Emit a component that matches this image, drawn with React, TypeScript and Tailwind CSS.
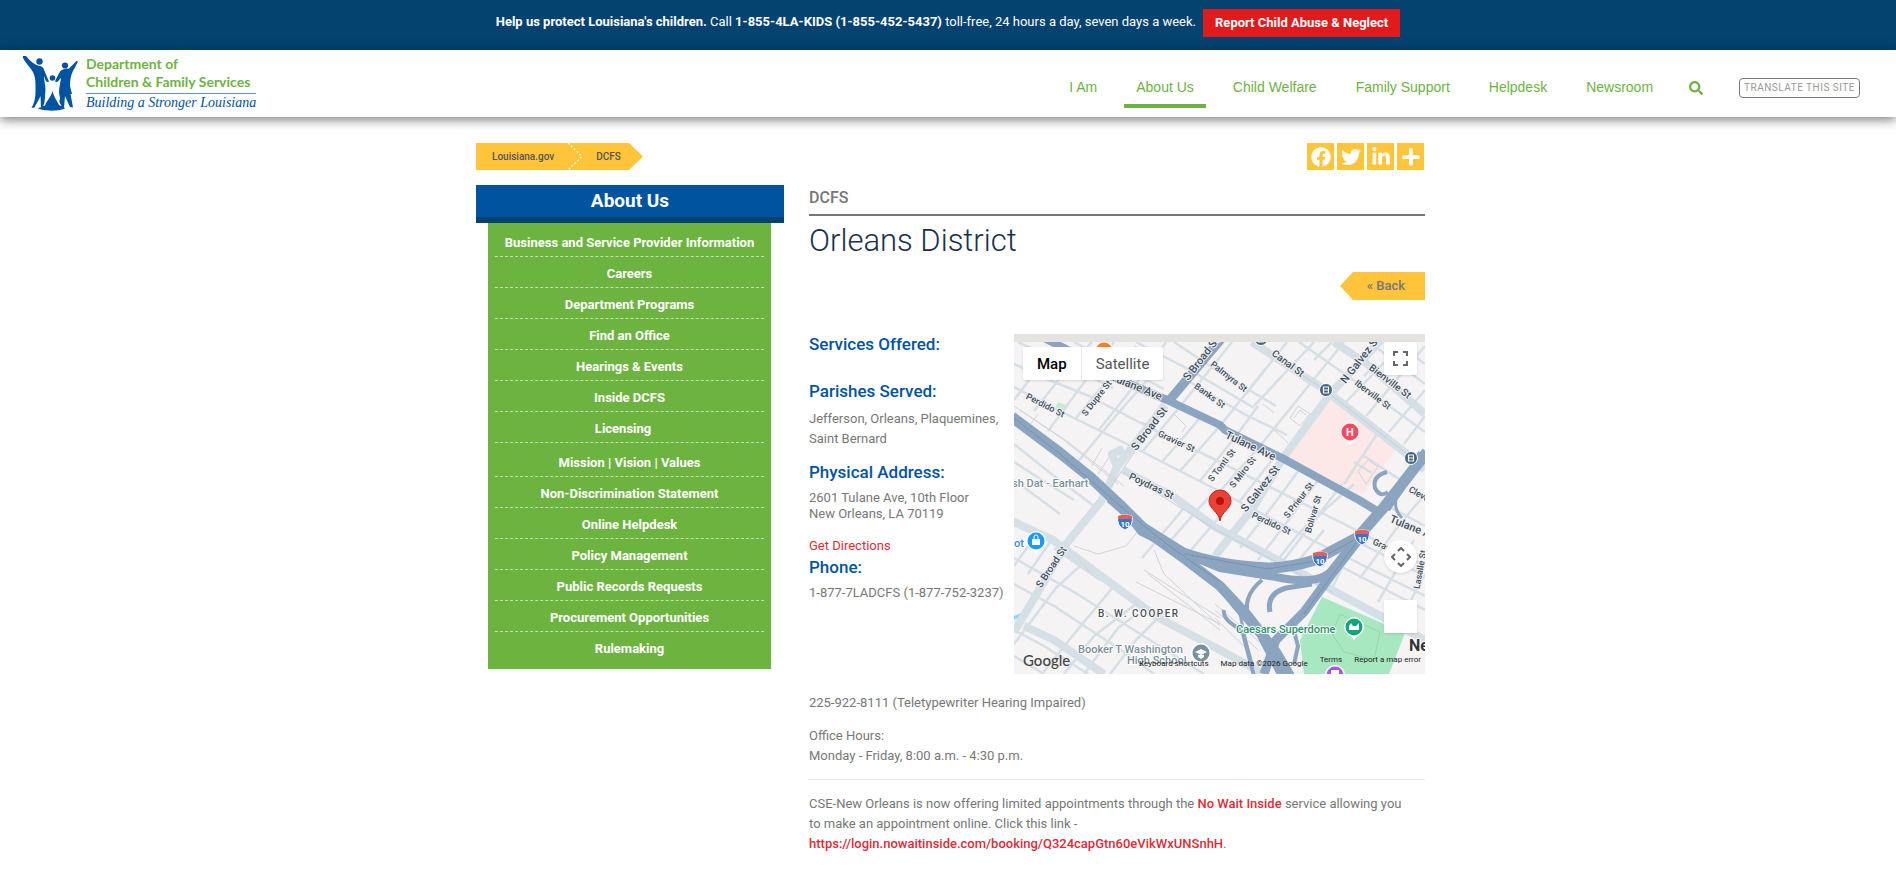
import { FaFacebook, FaLinkedinIn, FaPlus, FaSearch, FaTwitter } from "react-icons/fa";

const NAV = ["I Am", "About Us", "Child Welfare", "Family Support", "Helpdesk", "Newsroom"];

const SIDE_LINKS = [
  "Business and Service Provider Information",
  "Careers",
  "Department Programs",
  "Find an Office",
  "Hearings & Events",
  "Inside DCFS",
  "Licensing\u00a0\u00a0\u00a0\u00a0",
];

const SIDE_LINKS_MORE = [
  "Mission | Vision | Values",
  "Non-Discrimination Statement",
  "Online Helpdesk",
  "Policy Management",
  "Public Records Requests",
  "Procurement Opportunities",
  "Rulemaking",
];

const SHARE = [
  { label: "Facebook", Icon: FaFacebook },
  { label: "Twitter", Icon: FaTwitter },
  { label: "LinkedIn", Icon: FaLinkedinIn },
  { label: "Share", Icon: FaPlus },
];

// Side streets, drawn thin
const STREETS = [
  "M0 53 60 84 119 113 205 157 300 207 411 262",
  "M0 30 30 44 75 62 144 98 206 128 330 190 411 232",
  "M4 8 50 30 99 54",
  "M60 8 150 55",
  "M122 8 176 36 240 74",
  "M160 8 205 38 262 72",
  "M176 48 230 80 273 101",
  "M240 8 262 26",
  "M285 8 345 50 411 98",
  "M355 8 411 50",
  "M382 8 411 30",
  "M20 77 54 34 78 8",
  "M0 66 44 8",
  "M34 97 100 8",
  "M62 84 122 12",
  "M84 97 128 42 152 8",
  "M62 130 100 84 134 45",
  "M128 118 164 75 210 18 218 8",
  "M148 128 186 84",
  "M166 137 206 92 252 34",
  "M186 147 222 102 244 72",
  "M206 157 246 112 300 45 330 8",
  "M226 167 258 126",
  "M288 132 260 170 226 214",
  "M308 141 270 192 244 226",
  "M328 150 300 187 262 236",
  "M300 26 318 8",
  "M352 82 411 12",
  "M330 70 390 8",
  "M375 98 411 56",
  "M390 110 411 82",
  "M363 100 330 150",
  "M240 72 300 8",
  "M232 60 273 8",
  "M350 42 362 30",
  "M0 224 60 258 120 296 190 340",
  "M0 250 40 272 110 318 140 340",
  "M0 296 30 312 74 340",
  "M0 322 30 340",
  "M40 214 86 246",
  "M28 340 60 300 100 252",
  "M50 340 80 302 122 270",
  "M0 310 42 254 66 232",
  "M70 340 104 294 128 276",
  "M96 340 122 306 142 286",
  "M14 240 36 208",
  "M0 232 20 204",
  "M0 110 40 142 80 172",
  "M0 128 28 146 60 166",
  "M0 146 46 180",
  "M128 224 170 174",
  "M150 214 194 164",
  "M172 222 206 182",
  "M196 228 224 194",
  "M262 228 286 198 340 150",
  "M280 232 310 196",
  "M330 230 354 196",
  "M346 244 386 190 411 160",
  "M364 268 400 206",
  "M384 290 411 240",
  "M340 206 411 242",
  "M326 232 411 276",
  "M316 258 330 230",
  "M350 122 385 145",
  "M340 128 358 139",
  "M366 168 400 186 411 192",
];

// Wider collectors
const AVENUES = [
  "M238 8 311 56 398 124 411 136",
  "M320 8 353 30 411 80",
  "M368 5 316 60 269 124 241 171 201 222",
  "M151 71 103 133 88 166 53 209 9 283 0 298",
  "M109 136 160 163 201 193 260 224 318 256 411 306",
  "M-4 186 39 206 79 236 143 283 206 316 250 340",
  "M10 292 40 306 90 340",
  "M103 133 98 120 106 116 112 126",
];

const FINE_LINES = [
  "M0 72 50 106 104 150",
  "M6 76 54 108 110 152",
  "M60 212 84 220 112 212 126 194",
  "M140 216 150 240 206 292",
  "M130 236 206 284",
  "M134 240 206 296",
  "M122 248 206 290",
  "M76 238 60 220",
  "M201 270 250 312",
  "M201 276 244 316",
  "M201 284 236 318",
  "M24 80 12 96",
  "M78 132 88 114",
  "M84 140 96 122",
  "M160 80 172 92 168 98",
  "M128 88 142 96",
];

const FREEWAYS = [
  { d: "M-2 83 46 119 76 143 106 171 129 194 169 219Q206 232 254 234 275 234 301 226L344 203 371 172 413 118", w: 11 },
  { d: "M96 164 140 203 172 226 206 252 234 282 262 318 276 342", w: 10 },
  { d: "M170 219 206 234 262 243Q306 252 318 236L344 203", w: 8 },
  { d: "M346 204 318 240 290 278 262 306 250 340", w: 9 },
  { d: "M206 252 222 272 246 300 268 342", w: 8 },
  { d: "M210 276Q208 286 228 296L240 342", w: 4 },
  { d: "M248 246Q226 264 236 286L250 306", w: 4 },
  { d: "M298 250 272 254Q252 260 256 278", w: 5 },
  { d: "M226 280 232 308 238 330", w: 3 },
  { d: "M278 290 284 312 280 330", w: 4 },
  { d: "M373 138Q358 142 361 154 366 164 374 158", w: 4 },
  { d: "M406 118 388 156 374 176", w: 4 },
  { d: "M112 182 126 200 150 212", w: 3 },
  { d: "M382 166 Q380 176 388 184", w: 3 },
];

const STREET_LABELS = [
  { t: "Perdido St", x: 30, y: 74, r: 27, s: 9 },
  { t: "S Dupre St", x: 85, y: 66, r: -52, s: 9 },
  { t: "Tulane Ave", x: 121, y: 56, r: 22, s: 11 },
  { t: "S Broad St", x: 190, y: 27, r: -52, s: 11 },
  { t: "S Broad St", x: 138, y: 97, r: -52, s: 11 },
  { t: "Gravier St", x: 161, y: 110, r: 25, s: 9 },
  { t: "Banks St", x: 194, y: 64, r: 36, s: 9 },
  { t: "Palmyra St", x: 213, y: 45, r: 38, s: 9 },
  { t: "Canal St", x: 272, y: 32, r: 37, s: 10 },
  { t: "N Galvez St", x: 349, y: 28, r: -52, s: 11 },
  { t: "Bienville St", x: 374, y: 50, r: 37, s: 10 },
  { t: "Iberville St", x: 357, y: 63, r: 37, s: 9 },
  { t: "Tulane Ave", x: 235, y: 115, r: 25, s: 11 },
  { t: "S Tonti St", x: 210, y: 133, r: -52, s: 9 },
  { t: "S Miro St", x: 231, y: 140, r: -52, s: 9 },
  { t: "S Galvez St", x: 249, y: 157, r: -52, s: 11 },
  { t: "Poydras St", x: 136, y: 155, r: 25, s: 10 },
  { t: "Perdido St", x: 256, y: 192, r: 25, s: 9 },
  { t: "S Prieur St", x: 287, y: 168, r: -52, s: 9 },
  { t: "Bolivar St", x: 302, y: 181, r: -74, s: 9 },
  { t: "S Broad St", x: 40, y: 235, r: -56, s: 10 },
  { t: "Tulane Ave", x: 400, y: 198, r: 22, s: 11 },
  { t: "Gravier St", x: 376, y: 218, r: 24, s: 9 },
  { t: "Lasalle St", x: 409, y: 236, r: -80, s: 9 },
  { t: "Cleveland", x: 411, y: 167, r: 30, s: 9 },
];

function Logo() {
  return (
    <a href="#home" className="flex items-center gap-2" aria-label="Department of Children & Family Services">
      <svg viewBox="0 0 55 55" className="h-[55px] w-[55px] shrink-0" fill="#00549f">
        <circle cx="16.5" cy="5.5" r="3.2" />
        <circle cx="42" cy="9.5" r="3.1" />
        <path d="M0 0 3 0C7 5 11 8.500 16 10c3 0 5 2 5.500 5l4 9.500c1 1.500-1 3-2.200 1.500L21 20c0 5 1.500 9 1.500 14L21 53h-3l-.500-13C16 44 13 48 11.500 51.500L8.500 52C12 46 12.500 40 12.500 35 12.500 25 13 20 8 13 5 9 2 6 0 2Z" />
        <path d="M55 5.500 53.500 5 46 12.500c-4 .500-7 .500-9 3L32.500 24c-1 2 1 3 2.500 1.500l3-4c-.500 5-2 10-2 15L37 42l-1 5 1 5h4l1-12 5 11 3 .500L47.500 38h1.500L47 30c0-7 1-11 3-15Z" />
        <path d="M22 24.500c2 1.500 4 2.500 7.500 2.500s5-1 7-2.500L33.500 31c-.500 4 .500 8 2 13l3 6-7.500-2-1.500-9-2 9-7.500 2 4-8c1.500-4 2.500-7 1.500-11Z" fill="#fff" />
        <circle cx="29.5" cy="22" r="2.8" />
        <path d="M29.500 35c-1 5-5 9-7 13 0 2-3 3.500-8 4C19 55.500 38 55.500 42.500 52c-4-.500-6-2-7-4-2-4-5-8-6-13Z" />
      </svg>
      <span className="block">
        <span className="block font-['Lato',sans-serif] text-sm leading-[18px] font-bold text-[#6db33f]">
          Department of
          <br />
          Children &amp; Family Services
        </span>
        <span className="mt-[2px] block border-t border-[#5f93c4] font-['Liberation_Serif',serif] text-sm leading-[18px] text-[#00549f] italic">
          Building a Stronger Louisiana
        </span>
      </span>
    </a>
  );
}

function Shield({ x, y }: { x: number; y: number }) {
  return (
    <g transform={`translate(${x} ${y})`}>
      <path d="M-7-6Q0-9 7-6 9 4 0 8-9 4-7-6Z" fill="#3d74c6" stroke="#fff" strokeWidth="1" />
      <path d="M-7-6Q0-9 7-6L7-3H-7Z" fill="#e0605c" />
      <text y="5" fontSize="8" fontWeight="700" fill="#fff" textAnchor="middle">
        10
      </text>
    </g>
  );
}

function Pin({ x, y, color }: { x: number; y: number; color: string }) {
  return (
    <g transform={`translate(${x} ${y})`}>
      <path d="M-10 0a10 10 0 1 1 20 0c0 6-6 8-10 13-4-5-10-7-10-13Z" fill="#fff" />
      <circle r="8.500" fill={color} />
    </g>
  );
}

function MapDrawing() {
  return (
    <svg
      viewBox="0 0 411 340"
      preserveAspectRatio="xMidYMid slice"
      className="h-full w-full font-['Roboto',sans-serif]"
      role="img"
      aria-label="Map of 2601 Tulane Ave"
    >
      <rect width="411" height="340" fill="#f5f3f4" />
      <path d="M318 64 383 114 348 161 273 124Z" fill="#fce8e6" />
      <path d="M44 68 54 72 50 79 41 74Z" fill="#c3ecd0" />
      <path d="M0 282 14 276 10 281 0 286Z" fill="#8adcf0" />
      <path d="M308 263 391 299 375 340H290L286 306Z" fill="#a8e8c0" />
      <path d="M326 280 366 298 360 326 330 318 318 300Z" fill="none" stroke="#95d6af" />
      <g fill="none" stroke="#d5dfe6" strokeLinejoin="round">
        <g strokeWidth="2.500">
          {STREETS.map((d) => (
            <path key={d} d={d} />
          ))}
        </g>
        <g strokeWidth="8">
          {AVENUES.map((d) => (
            <path key={d} d={d} />
          ))}
        </g>
        <g strokeWidth="1" stroke="#d0d4d8">
          {FINE_LINES.map((d) => (
            <path key={d} d={d} />
          ))}
          <path d="M276 84 284 72 296 80 286 92ZM280 84 286 76 292 81M249 70 260 79M260 96 274 109M344 137 354 126 364 133 352 150Z" />
        </g>
      </g>
      <g fill="none" stroke="#c3d0da">
        <path d="M262 24 311 56 398 124M151 73 92 160M109 138 201 195 318 258" />
      </g>
      <g fill="none" stroke="#8ba5c1" strokeLinejoin="round">
        <path d="M30 4 50 14 99 43 153 66 206 91 211 96 268 124 345 166 368 180" strokeWidth="8" />
        <path d="M208 4 154 68" strokeWidth="9" />
        {FREEWAYS.map((f) => (
          <path key={f.d} d={f.d} strokeWidth={f.w} />
        ))}
      </g>
      <g fill="none" stroke="#7793b3" strokeWidth="1">
        <path d="M0 84 46 120 106 172 150 208 206 248M170 220 254 235 301 227 344 204M344 206 290 280" />
      </g>

      {/* street names */}
      <g fill="#3c4f60" stroke="#f5f3f4" strokeWidth="2" strokeLinejoin="round" paintOrder="stroke" textAnchor="middle" fontWeight="500">
        {STREET_LABELS.map((l) => (
          <text key={`${l.t}${l.x}`} transform={`translate(${l.x} ${l.y}) rotate(${l.r})`} fontSize={l.s}>
            {l.t}
          </text>
        ))}
      </g>
      <g stroke="#fff" strokeWidth="2" strokeLinejoin="round" paintOrder="stroke" fontWeight="500" fontSize="11">
        <text x="-2" y="153" fill="#78909c">sh Dat - Earhart</text>
        <text x="0" y="213" fill="#3c8ce7">ot</text>
        <text x="84" y="283" fontSize="10" letterSpacing="1.500" fill="#4a4f55">B. W. COOPER</text>
        <text x="64" y="319" fill="#78909c">Booker T Washington</text>
        <text x="113" y="330" fill="#78909c">High School</text>
        <text x="222" y="299" fill="#26906a">Caesars Superdome</text>
        <text x="395" y="317" fontSize="16" fontWeight="700" fill="#333">New Orleans</text>
      </g>

      <Shield x={111} y={188} />
      <Shield x={306} y={225} />
      <Shield x={348} y={203} />

      <Pin x={336} y={98} color="#f8485e" />
      <text x="336" y="102" fontSize="11" fontWeight="700" fill="#fff" textAnchor="middle">H</text>
      <Pin x={22} y={207} color="#1a9bfc" />
      <path d="M18 205h8v6h-8Z" fill="#fff" />
      <path d="M20 205v-2a2 2 0 0 1 4 0v2" fill="none" stroke="#fff" />
      <Pin x={340} y={293} color="#12a57b" />
      <path d="M335 296v-4l2-3 2 3h3l3-3v7Z" fill="#fff" />
      <Pin x={187} y={319} color="#78909c" />
      <path d="M181 318 187 315 193 318 187 321ZM184 321v2l3 2 3-2v-2" fill="#fff" />
      <Pin x={321} y={341} color="#a855f7" />
      <path d="M317 336h8v4h-8Z" fill="#fff" />
      <Pin x={90} y={17} color="#ff7f27" />

      {/* streetcar stops */}
      {[
        [312, 56],
        [397, 124],
        [247, 5],
      ].map(([x, y]) => (
        <g key={x} transform={`translate(${x} ${y})`}>
          <circle r="6.500" fill="#46637d" stroke="#fff" />
          <path d="M-2.500-3h5v6h-5ZM-2.500 0h5" fill="none" stroke="#fff" strokeWidth="1.200" />
        </g>
      ))}

      <path d="M206 187c-1-9-11-12-11-20a11 11 0 1 1 22 0c0 8-10 11-11 20Z" fill="#ea4335" stroke="#c5221f" strokeWidth="1" />
      <circle cx="206" cy="167" r="4" fill="#b31412" />
      <rect width="411" height="8" fill="#e5e3df" />
    </svg>
  );
}

function OfficeMap() {
  return (
    <div className="relative h-[340px] min-w-0 flex-1 overflow-hidden">
      <MapDrawing />
      <div className="absolute top-[13px] left-[9px] flex h-[33px] rounded-xs bg-white text-[15px] shadow">
        <button className="border-r border-gray-200 px-[14px] font-medium text-black">Map</button>
        <button className="px-[14px] text-[#565656]">Satellite</button>
      </div>
      <button className="absolute top-2 right-2 grid size-[33px] place-items-center rounded-xs bg-white shadow" aria-label="Fullscreen">
        <svg viewBox="0 0 15 15" className="size-[15px]" fill="none" stroke="#666" strokeWidth="2">
          <path d="M1 5V1h4M10 1h4v4M14 10v4h-4M5 14H1v-4" />
        </svg>
      </button>
      <button className="absolute right-2 bottom-[101px] grid size-[33px] place-items-center rounded-full bg-white shadow" aria-label="Map camera controls">
        <svg viewBox="0 0 20 20" className="size-5" fill="none" stroke="#666" strokeWidth="2">
          <path d="M7 4 10 1 13 4M7 16 10 19 13 16M4 7 1 10 4 13M16 7 19 10 16 13" />
        </svg>
      </button>
      <div className="absolute right-2 bottom-[41px] size-[33px] bg-white shadow" />
      <span className="absolute bottom-1 left-[9px] font-['Lato',sans-serif] text-[15px] leading-5 font-medium text-[#444]">Google</span>
      <div className="absolute right-1 bottom-1 flex items-end gap-3 text-[8px] leading-3 text-[#222]">
        <button>Keyboard shortcuts</button>
        <span>Map data ©2026 Google</span>
        <a href="#terms" className="mb-1">Terms</a>
        <a href="#report-map" className="mb-1">Report a map error</a>
      </div>
    </div>
  );
}

function SideItem({ label }: { label: string }) {
  return (
    <li className="h-[31px] border-b border-dashed border-white/60 leading-[34px]">
      <a href="#section">{label}</a>
    </li>
  );
}

function Sidebar() {
  return (
    <nav className="w-[308px] shrink-0 text-center" aria-label="About Us">
      <h2 className="border-b-6 border-[#04426f] bg-[#00549f] pt-[2px] pb-[2px] text-[19px] leading-7 font-bold text-white">About Us</h2>
      <div className="mr-[13px] ml-3 bg-[#6db33f] px-[7px] pt-[3px] pb-[6px] text-[13px] font-bold text-white">
        <ul>
          {SIDE_LINKS.map((l) => (
            <SideItem key={l} label={l} />
          ))}
        </ul>
        <ul className="pt-[3px] [&>li:last-child]:border-0">
          {SIDE_LINKS_MORE.map((l) => (
            <SideItem key={l} label={l} />
          ))}
        </ul>
      </div>
    </nav>
  );
}

export default function App() {
  return (
    <div className="min-h-screen bg-white font-['Roboto',sans-serif] text-[13px] leading-5 text-[#777]">
      <div className="flex h-[50px] items-start justify-center gap-[7px] bg-[#04426f] pt-[9px] text-white">
        <p className="leading-[26px]">
          <b>Help us protect Louisiana's children.</b> Call <b>1-855-4LA-KIDS (1-855-452-5437)</b> toll-free, 24 hours a day,
          seven days a week.
        </p>
        <a href="#report" className="bg-[#e11b1c] px-3 leading-7 font-bold">
          Report Child Abuse &amp; Neglect
        </a>
      </div>

      <header className="relative flex h-[67px] items-center justify-between bg-white pr-9 pl-[23px] shadow-[0_3px_10px_rgba(0,0,0,0.5)]">
        <Logo />
        <div className="flex items-center">
          <nav className="flex gap-[15px] font-['Liberation_Sans',sans-serif] text-sm text-[#6db33f]" aria-label="Main">
            {NAV.map((n) => (
              <a
                key={n}
                href="#nav"
                className={n === "About Us" ? "border-b-4 border-[#6db33f] px-3 pt-[17px] pb-[7px]" : "px-3 pt-[17px] pb-[11px]"}
              >
                {n}
              </a>
            ))}
          </nav>
          <div className="flex items-center gap-9 pt-2 pl-6">
            <button className="text-[#6db33f]" aria-label="Search">
              <FaSearch className="size-[14px]" />
            </button>
            <button className="rounded-sm border border-[#777] px-1 text-[10px] leading-[18px] tracking-wider text-[#999] uppercase">
              Translate this site
            </button>
          </div>
        </div>
      </header>

      <div className="mx-auto max-w-[956px] pt-[26px] pr-px pl-[6px]">
        <div className="flex justify-between pr-px">
          <nav className="flex text-[10px] leading-[27px] font-medium text-[#555]" aria-label="Breadcrumb">
            <a href="#la" className="bg-[#ffc439] pr-[13px] pl-4">Louisiana.gov</a>
            <svg viewBox="0 0 17 27" className="h-[27px] w-[17px] bg-[#ffc439]" fill="none" stroke="#fff" strokeDasharray="2 2">
              <path d="M1 0 15 13.500 1 27" strokeWidth="1.200" />
            </svg>
            <a href="#dcfs" className="bg-[#ffc439] pr-2 pl-3">DCFS</a>
            <svg viewBox="0 0 14 27" className="h-[27px] w-[14px]" fill="#ffc439">
              <path d="M0 0 14 13.500 0 27Z" />
            </svg>
          </nav>
          <div className="flex gap-[3px]">
            {SHARE.map(({ label, Icon }) => (
              <a key={label} href="#share" aria-label={label} className="grid size-[27px] place-items-center bg-[#ffc439] text-white">
                <Icon className="size-5" />
              </a>
            ))}
          </div>
        </div>

        <div className="mt-[15px] flex items-start gap-[25px]">
          <Sidebar />

          <main className="min-w-0 flex-1">
            <p className="border-b-2 border-[#777] pt-px pb-1 text-base leading-6 font-medium">DCFS</p>
            <h1 className="mt-[5px] text-[31px] leading-10 font-light text-[#1b2f4b]">Orleans District</h1>
            <div className="mt-[11px] flex justify-end">
              <a href="#back" className="flex font-medium">
                <svg viewBox="0 0 13 28" className="h-7 w-[13px]" fill="#ffc439">
                  <path d="M13 0 0 14 13 28Z" />
                </svg>
                <span className="bg-[#ffc439] pr-5 pl-[14px] leading-7">« Back</span>
              </a>
            </div>

            <div className="mt-[34px] flex">
              <section className="w-[205px] shrink-0 whitespace-nowrap">
                <h3 className="text-[17px] font-medium text-[#00549f]">Services Offered:</h3>
                <h3 className="mt-[27px] text-[17px] font-medium text-[#00549f]">Parishes Served:</h3>
                <p className="mt-2">
                  Jefferson, Orleans, Plaquemines,
                  <br />
                  Saint Bernard
                </p>
                <h3 className="mt-[13px] text-[17px] font-medium text-[#00549f]">Physical Address:</h3>
                <p className="mt-2 leading-4">
                  2601 Tulane Ave, 10th Floor
                  <br />
                  New Orleans, LA 70119
                </p>
                <a href="#directions" className="mt-[14px] block text-[#e02b36]">
                  Get Directions
                </a>
                <h3 className="mt-px text-[17px] font-medium text-[#00549f]">Phone:</h3>
                <p className="mt-[6px]">1-877-7LADCFS (1-877-752-3237)</p>
              </section>
              <OfficeMap />
            </div>

            <p className="mt-[19px]">225-922-8111 (Teletypewriter Hearing Impaired)</p>
            <p className="mt-[13px]">
              Office Hours:
              <br />
              Monday - Friday, 8:00 a.m. - 4:30 p.m.
            </p>
            <hr className="mt-[13px] border-gray-200" />
            <p className="mt-[14px] pr-4">
              CSE-New Orleans is now offering limited appointments through the{" "}
              <a href="#nwi" className="font-medium text-[#e02b36]">No Wait Inside</a> service allowing you to make an
              appointment online. Click this link -{" "}
              <a href="#booking" className="font-medium text-[#e02b36]">
                https://login.nowaitinside.com/booking/Q324capGtn60eVikWxUNSnhH
              </a>
              .
            </p>
          </main>
        </div>
      </div>
    </div>
  );
}
